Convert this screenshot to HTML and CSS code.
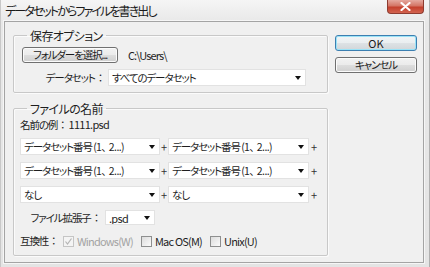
FILE: index.html
```html
<!DOCTYPE html>
<html lang="ja">
<head>
<meta charset="utf-8">
<link rel="stylesheet" href="styles.css">
</head>
<body>
<div class="window">
  <div class="titlebar">
    <span class="title">データセットからファイルを書き出し</span>
    <span class="close"><svg width="11" height="9" viewBox="0 0 11 9"><path d="M1.5 1 L9.5 8 M9.5 1 L1.5 8" stroke="#fff" stroke-width="2.2" stroke-linecap="round"/></svg></span>
  </div>
  <div class="client">
    <div class="left">
      <fieldset class="group g1">
        <legend>保存オプション</legend>
        <div class="row r-folder">
          <span class="btn btn-folder">フォルダーを選択...</span>
          <span class="path">C:\Users\</span>
        </div>
        <div class="row r-dataset">
          <span class="lbl lbl-dataset">データセット<span class="colon">：</span></span>
          <span class="select sel-dataset"><span class="val">すべてのデータセット</span><i class="arrow"></i></span>
        </div>
      </fieldset>
      <fieldset class="group g2">
        <legend>ファイルの名前</legend>
        <div class="example">名前の例<span class="colon">：</span><span class="latin">1111.psd</span></div>
        <div class="row r-name">
          <span class="select sel-a"><span class="val">データセット番号 <span class="paren">(1<span class="comma">、</span>2...)</span></span><i class="arrow"></i></span>
          <span class="plus">+</span>
          <span class="select sel-b"><span class="val">データセット番号 <span class="paren">(1<span class="comma">、</span>2...)</span></span><i class="arrow"></i></span>
          <span class="plus plus-end">+</span>
        </div>
        <div class="row r-name">
          <span class="select sel-a"><span class="val">データセット番号 <span class="paren">(1<span class="comma">、</span>2...)</span></span><i class="arrow"></i></span>
          <span class="plus">+</span>
          <span class="select sel-b"><span class="val">データセット番号 <span class="paren">(1<span class="comma">、</span>2...)</span></span><i class="arrow"></i></span>
          <span class="plus plus-end">+</span>
        </div>
        <div class="row r-name">
          <span class="select sel-a"><span class="val">なし</span><i class="arrow"></i></span>
          <span class="plus">+</span>
          <span class="select sel-b"><span class="val">なし</span><i class="arrow"></i></span>
          <span class="plus plus-end">+</span>
        </div>
        <div class="row r-ext">
          <span class="lbl lbl-ext">ファイル拡張子<span class="colon">：</span></span>
          <span class="select sel-ext"><span class="val latin">.psd</span><i class="arrow"></i></span>
        </div>
        <div class="row r-compat">
          <span class="lbl lbl-compat">互換性<span class="colon">：</span></span>
          <span class="check checked disabled"><svg width="9" height="9" viewBox="0 0 9 9"><path d="M1.5 4.5 L3.5 7 L7.5 1.5" fill="none" stroke="#b5b5b5" stroke-width="1.2"/></svg></span>
          <span class="clabel disabled-text">Windows(W)</span>
          <span class="check"></span>
          <span class="clabel">Mac OS(M)</span>
          <span class="check"></span>
          <span class="clabel">Unix(U)</span>
        </div>
      </fieldset>
    </div>
    <div class="right">
      <span class="btn btn-ok">OK</span>
      <span class="btn btn-cancel">キャンセル</span>
    </div>
  </div>
</div>
</body>
</html>
```

FILE: styles.css
```css
html, body {
  margin: 0;
  padding: 0;
}
body {
  width: 430px;
  height: 267px;
  overflow: hidden;
  background: #e4e4e4;
  font-family: "Noto Sans CJK JP", "Noto Sans", sans-serif;
  font-size: 10.5px;
  line-height: 14px;
  letter-spacing: -1.1px;
  font-feature-settings: "palt";
  color: #1e1e1e;
  white-space: nowrap;
}
.latin {
  font-size: 11px;
  letter-spacing: -0.7px;
}
.window {
  height: 267px;
  display: flex;
  flex-direction: column;
  background: linear-gradient(to bottom, #f5f5f5 0px, #e8e8e8 22px, #e4e4e4 100%);
  box-shadow: inset 1px 0 0 #c8c8c8, inset -1px 0 0 #b0b0b0;
}
.titlebar {
  height: 21px;
  flex: none;
  display: flex;
  justify-content: space-between;
  align-items: flex-start;
  padding-left: 5px;
}
.title {
  font-size: 12px;
  line-height: 14px;
  letter-spacing: -1.9px;
  margin-top: 4px;
  color: #1a1a1a;
}
.close {
  box-sizing: border-box;
  width: 37px;
  height: 14px;
  margin-right: 6px;
  border: 1px solid #8d3b30;
  border-top: none;
  border-radius: 0 0 4px 4px;
  background: linear-gradient(to bottom, #e5a99f 0%, #d47565 45%, #c4402d 55%, #d2634f 100%);
  display: flex;
  align-items: center;
  justify-content: center;
}
.client {
  flex: 1;
  min-height: 0;
  margin: 0 6px 4px 4px;
  border: 1px solid #a4a4a4;
  background: #f0f0f0;
  display: flex;
  padding: 6px 0 0 8px;
  box-shadow: 0 0 0 1px #f6f6f6;
}
.left {
  width: 315px;
  flex: none;
  display: flex;
  flex-direction: column;
  gap: 8px;
}
.right {
  margin-left: 7px;
  width: 82px;
  padding-top: 7px;
  display: flex;
  flex-direction: column;
  gap: 6px;
}
.group {
  margin: 0;
  border: 1px solid #c8c8c8;
  border-radius: 2px;
  box-shadow: inset 1px 1px 0 #fbfbfb, 1px 1px 0 #fbfbfb;
  padding: 0 0 6px 6px;
  min-width: 0;
}
.group legend {
  font-size: 12px;
  line-height: 15px;
  letter-spacing: -0.6px;
  padding: 0 3px;
  margin-left: 7px;
}
.colon {
  letter-spacing: 0;
  margin: 0 3px 0 3px;
}
.comma {
  font-feature-settings: normal;
  letter-spacing: -3px;
}
.row {
  display: flex;
  align-items: center;
}
.r-folder {
  margin-top: 4px;
}
.btn {
  box-sizing: border-box;
  display: flex;
  align-items: center;
  justify-content: center;
  border: 1px solid #707070;
  border-radius: 3px;
  background: linear-gradient(to bottom, #f2f2f2 0%, #ebebeb 48%, #dddddd 52%, #cfcfcf 100%);
  box-shadow: inset 0 0 0 1px #fbfbfb;
  color: #1a1a1a;
}
.btn-folder {
  width: 96px;
  height: 16px;
  margin-left: 2px;
}
.path {
  margin-left: 10px;
  font-size: 11px;
  letter-spacing: -0.9px;
}
.r-dataset {
  margin-top: 6px;
}
.lbl-dataset {
  width: 86px;
  margin-right: 2px;
  text-align: right;
}
.select {
  box-sizing: border-box;
  display: flex;
  align-items: center;
  background: #fff;
  border: 1px solid #e2e2e2;
  height: 17px;
  padding-left: 3px;
  overflow: hidden;
}
.select .val {
  line-height: 14px;
}
.paren {
  letter-spacing: -0.6px;
}
.arrow {
  flex: none;
  margin-left: auto;
  margin-right: 4px;
  width: 0;
  height: 0;
  border-left: 3px solid transparent;
  border-right: 3px solid transparent;
  border-top: 4px solid #111;
}
.sel-dataset {
  width: 198px;
}
.example {
  margin-top: 1px;
  line-height: 14px;
}
.r-name {
  margin-top: 6px;
}
.r-name + .r-name {
  margin-top: 7px;
}
.sel-a {
  width: 140px;
}
.sel-b {
  width: 141px;
}
.plus {
  width: 8px;
  text-align: center;
  color: #333;
  letter-spacing: 0;
  font-size: 11px;
}
.plus-end {
  width: 10px;
}
.r-ext {
  margin-top: 7px;
}
.lbl-ext {
  width: 82px;
  margin-right: 3px;
  text-align: right;
}
.sel-ext {
  width: 50px;
  height: 15px;
}
.r-compat {
  margin-top: 8px;
  height: 16px;
}
.lbl-compat {
  width: 43px;
}
.check {
  box-sizing: border-box;
  flex: none;
  width: 11px;
  height: 11px;
  border: 1px solid #8e8f8f;
  background: linear-gradient(135deg, #dcdcdc, #fbfbfb);
  display: flex;
  align-items: center;
  justify-content: center;
  margin-right: 3px;
}
.check.disabled {
  border-color: #c5c5c5;
  background: #f4f4f4;
}
.clabel {
  margin-right: 8px;
  font-size: 11px;
  letter-spacing: -0.8px;
}
.disabled-text {
  color: #a3a3a3;
}
.btn-ok {
  height: 16px;
  border-color: #3c7fb1;
  box-shadow: inset 0 0 0 1px #9be3f7;
  background: linear-gradient(to bottom, #f1f5f7 0%, #eaeef0 48%, #dde2e5 52%, #d2d6d9 100%);
  font-size: 11px;
  letter-spacing: 0;
}
.btn-cancel {
  height: 16px;
}
```
